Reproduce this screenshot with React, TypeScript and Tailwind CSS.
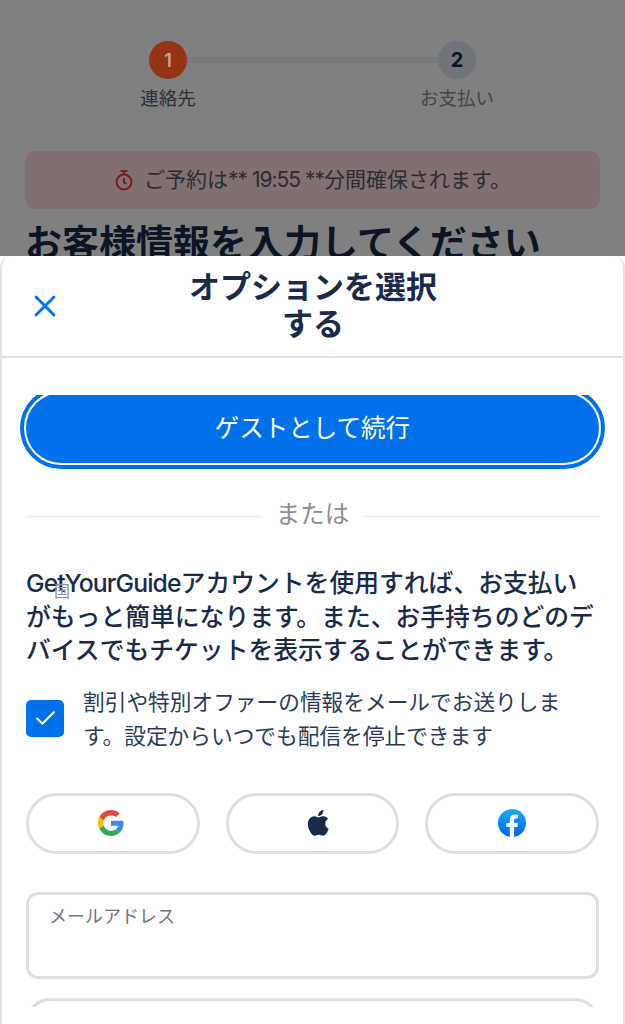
import { X, Check } from "lucide-react";

const FONT = { fontFamily: 'Inter, "Noto Sans CJK JP", sans-serif' };

function Background() {
  return (
    <div className="h-[256px] bg-[#808080]">
      <div className="flex justify-between pl-[140px] pr-[131px] pt-[41px] relative">
        <div className="flex w-[56px] flex-col items-center">
          <div className="z-10 flex h-[38px] w-[38px] items-center justify-center rounded-full bg-[#963416] text-[18px] font-semibold text-[#c9a498]">1</div>
          <p className="mt-[7px] whitespace-nowrap text-[18.5px] leading-[24px] text-[#2e3038]">連絡先</p>
        </div>
        <div className="mt-[16px] h-[6px] flex-1 -mx-[28px] bg-[#77797c]" />
        <div className="flex w-[74px] flex-col items-center">
          <div className="z-10 flex h-[38px] w-[38px] items-center justify-center rounded-full bg-[#717478] text-[20px] font-bold text-[#0d1525]">2</div>
          <p className="mt-[7px] whitespace-nowrap text-[18.5px] leading-[24px] text-[#45474e]">お支払い</p>
        </div>
      </div>
      <div className="mx-[25px] mt-[41px] flex h-[58px] items-center justify-center gap-[10px] rounded-[10px] bg-[#807072] text-[21px] text-[#2b2d35]">
        <svg width="20" height="24" viewBox="0 0 20 24" fill="none" stroke="#7f1a20" strokeWidth="2">
          <circle cx="10" cy="14" r="7.5" />
          <path d="M6.5 3h7M10 3v3M10 10v4.5l2.5 1.5" />
        </svg>
        <span className="whitespace-nowrap">ご予約は<span className="tracking-[-1px]">** 19:55 **</span>分間確保されます。</span>
      </div>
      <h1 className="mx-[25px] mt-[10px] whitespace-nowrap text-[37px] font-bold leading-[50px] text-[#0d1525]">お客様情報を入力してください</h1>
    </div>
  );
}

function GoogleIcon() {
  return (
    <svg width="26" height="26" viewBox="0 0 48 48">
      <path fill="#EA4335" d="M24 9.5c3.54 0 6.71 1.22 9.21 3.6l6.85-6.85C35.9 2.38 30.47 0 24 0 14.62 0 6.51 5.38 2.56 13.22l7.98 6.19C12.43 13.72 17.74 9.5 24 9.5z" />
      <path fill="#4285F4" d="M46.98 24.55c0-1.57-.15-3.09-.38-4.55H24v9.02h12.94c-.58 2.96-2.26 5.48-4.78 7.18l7.73 6c4.51-4.18 7.09-10.36 7.09-17.65z" />
      <path fill="#FBBC05" d="M10.53 28.59c-.48-1.45-.76-2.99-.76-4.59s.27-3.14.76-4.59l-7.98-6.19C.92 16.46 0 20.12 0 24c0 3.88.92 7.54 2.56 10.78l7.97-6.19z" />
      <path fill="#34A853" d="M24 48c6.48 0 11.93-2.13 15.89-5.81l-7.73-6c-2.15 1.45-4.92 2.3-8.16 2.3-6.26 0-11.57-4.22-13.47-9.91l-7.98 6.19C6.51 42.62 14.62 48 24 48z" />
    </svg>
  );
}

function AppleIcon() {
  return (
    <svg width="30" height="32" viewBox="0 0 24 24" fill="#1a2b49">
      <path d="M17.05 12.54c-.03-2.6 2.12-3.85 2.22-3.91-1.21-1.77-3.09-2.01-3.76-2.04-1.6-.16-3.12.94-3.93.94-.81 0-2.06-.92-3.39-.89-1.74.03-3.35 1.01-4.25 2.57-1.81 3.14-.46 7.79 1.3 10.34.86 1.25 1.89 2.65 3.23 2.6 1.3-.05 1.79-.84 3.36-.84 1.57 0 2.01.84 3.38.81 1.4-.02 2.28-1.27 3.13-2.53.99-1.45 1.39-2.85 1.42-2.92-.03-.01-2.72-1.04-2.71-4.13zM14.47 4.9c.71-.87 1.2-2.07 1.06-3.27-1.03.04-2.28.69-3.02 1.55-.66.76-1.24 1.99-1.09 3.16 1.15.09 2.33-.58 3.05-1.44z" />
    </svg>
  );
}

function FacebookIcon() {
  return (
    <svg width="28" height="28" viewBox="0 0 28 28">
      <defs>
        <linearGradient id="fb" x1="0" y1="0" x2="0" y2="1">
          <stop offset="0" stopColor="#18acfe" />
          <stop offset="1" stopColor="#0163e0" />
        </linearGradient>
      </defs>
      <circle cx="14" cy="14" r="14" fill="url(#fb)" />
      <path fill="#fff" d="M19.4 17.9l.6-4h-3.9v-2.5c0-1.1.5-2.1 2.3-2.1h1.7V5.9s-1.6-.3-3.1-.3c-3.2 0-5.2 1.9-5.2 5.4v2.9H8.3v4h3.5v9.9c.7.1 1.4.2 2.2.2s1.4-.1 2.1-.2v-9.9h3.3z" />
    </svg>
  );
}

function Sheet() {
  return (
    <div className="absolute inset-x-0 top-[256px] bottom-0 overflow-hidden rounded-t-[12px] border-x-2 border-[#e0e3e9] bg-white">
      <header className="-mx-[2px] flex h-[102px] items-center border-b-[2px] border-[#dcdfe6] bg-white">
        <X className="ml-[27px] shrink-0 text-[#0071eb]" size={36} strokeWidth={1.9} />
        <h2 className="mx-auto -translate-x-[31px] w-[260px] pb-[3px] text-center text-[31px] font-bold leading-[37px] text-[#1a2b49]">オプションを選択する</h2>
      </header>
      <div className="mt-[37px] h-[612px] overflow-hidden px-[24px]">
        <div className="relative -mt-[2px] h-[70px]">
          <button className="absolute inset-x-0 top-0 h-[70px] rounded-full bg-[#0071eb] text-[24.5px] leading-none text-white outline-[4px] outline-offset-[2.5px] outline-[#0071eb]">ゲストとして続行</button>
        </div>
        <div className="mt-[33px] flex items-center gap-[14px]">
          <div className="mt-[4px] h-[1px] flex-1 bg-[#e4e6ea]" />
          <span className="text-[24.5px] leading-[36px] text-[#8b8f99]">または</span>
          <div className="mt-[4px] h-[1px] flex-1 bg-[#e4e6ea]" />
        </div>
        <div className="relative mt-[35px]">
          <p className="text-[24.8px] font-medium leading-[33.5px] text-[#1a2b49]"><span className="tracking-[-0.9px]">GetYourGuide</span>アカウントを使用すれば、お支払いがもっと簡単になります。また、お手持ちのどのデバイスでもチケットを表示することができます。</p>
          <span className="absolute left-[28px] top-[16px] text-[16px] leading-none text-[#8b8f99]">国</span>
        </div>
        <label className="mt-[17px] flex items-center gap-[19px]">
          <span className="flex h-[37px] w-[38px] shrink-0 items-center justify-center rounded-[5px] bg-[#0071eb]">
            <Check className="text-white" size={25} strokeWidth={2} />
          </span>
          <span className="w-[490px] text-[21.7px] leading-[34px] text-[#2b3b57]">割引や特別オファーの情報をメールでお送りします。設定からいつでも配信を停止できます</span>
        </label>
        <div className="mt-[40px] grid grid-cols-3 gap-[26px]">
          <button className="flex h-[61px] items-center justify-center rounded-full border-[3px] border-[#dcdfe6] pr-[3px]"><GoogleIcon /></button>
          <button className="flex h-[61px] items-center justify-center rounded-full border-[3px] border-[#dcdfe6] pl-[14px]"><AppleIcon /></button>
          <button className="flex h-[61px] items-center justify-center rounded-full border-[3px] border-[#dcdfe6]"><FacebookIcon /></button>
        </div>
        <div className="mt-[38px] h-[87px] rounded-[12px] border-[3px] border-[#dcdfe6] pl-[20px] pt-[8px] text-[18px] leading-[28px] text-[#6f7380]">メールアドレス</div>
        <div className="mt-[19px] h-[87px] rounded-[24px] border-[3px] border-[#dcdfe6]" />
      </div>
    </div>
  );
}

export default function App() {
  return (
    <div className="relative h-[1024px] w-[625px] overflow-hidden bg-white" style={FONT}>
      <Background />
      <Sheet />
    </div>
  );
}
